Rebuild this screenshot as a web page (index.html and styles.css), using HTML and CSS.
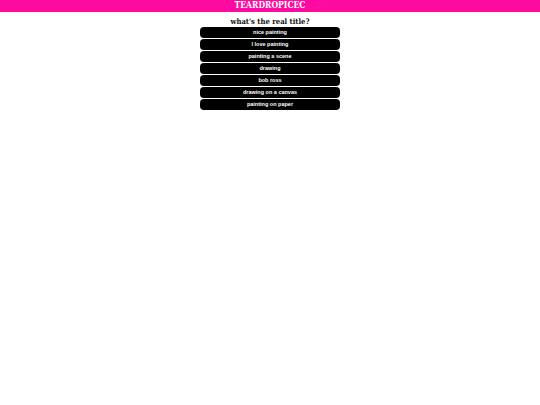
FILE: index.html
```html
<!DOCTYPE html>
<html>
<head>
<meta charset="utf-8">
<link rel="stylesheet" href="styles.css">
</head>
<body>
<header class="topbar">TEARDROPICEC</header>
<main class="quiz">
  <h1 class="question">what's the real title?</h1>
  <div class="options">
    <button class="option">nice painting</button>
    <button class="option">I love painting</button>
    <button class="option">painting a scene</button>
    <button class="option">drawing</button>
    <button class="option">bob ross</button>
    <button class="option">drawing on a canvas</button>
    <button class="option">painting on paper</button>
  </div>
</main>
</body>
</html>
```
FILE: styles.css
```css
html, body {
  margin: 0;
  padding: 0;
  background: #ffffff;
}
.topbar {
  height: 11.5px;
  background: #ff0aa0;
  color: #ffffff;
  font-family: "DejaVu Serif Condensed", "DejaVu Serif", serif;
  font-stretch: condensed;
  font-weight: bold;
  font-size: 8.5px;
  line-height: 11.5px;
  text-align: center;
}
.quiz {
  display: flex;
  flex-direction: column;
  align-items: center;
}
.question {
  margin: 4.5px 0 0 0;
  font-family: "DejaVu Serif Condensed", "DejaVu Serif", serif;
  font-stretch: condensed;
  font-weight: bold;
  font-size: 7.6px;
  line-height: 11px;
  color: #111111;
}
.options {
  display: flex;
  flex-direction: column;
  gap: 1.4px;
  width: 140px;
}
.option {
  display: block;
  width: 140px;
  height: 10.6px;
  margin: 0;
  padding: 0;
  border: none;
  border-radius: 4px;
  background: #000000;
  color: #ffffff;
  font-family: "Liberation Sans", Arial, sans-serif;
  font-weight: bold;
  font-size: 5.5px;
  line-height: 10.6px;
  text-align: center;
}
```
